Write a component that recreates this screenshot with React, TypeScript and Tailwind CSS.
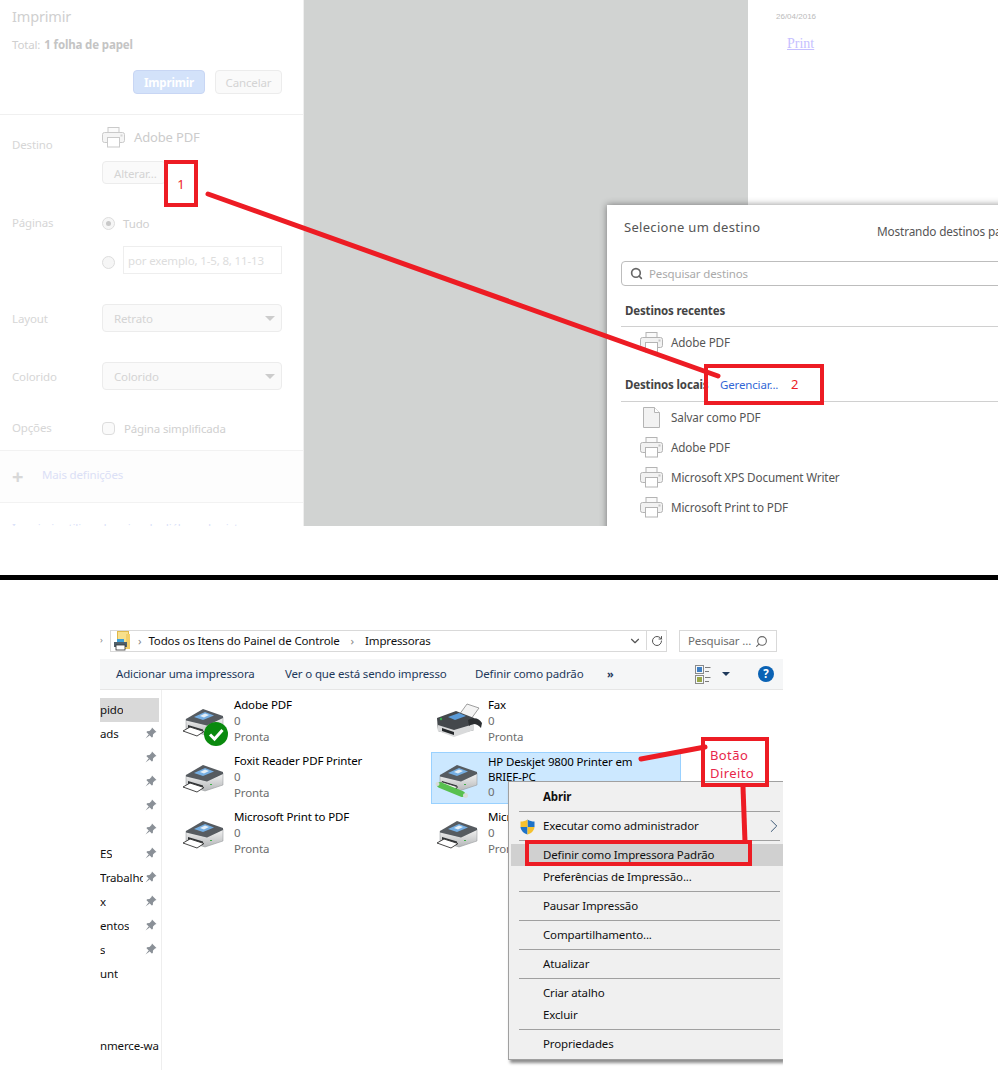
import React from 'react';
import { ChevronDown, RotateCw, Search, ChevronRight } from 'lucide-react';

const FlatPrinter = () => (
  <svg width="23" height="21" viewBox="0 0 23 21" className="shrink-0">
    <rect x="6" y="0.5" width="11" height="6" fill="#fafafa" stroke="#b4b4b4" />
    <rect x="0.5" y="5.5" width="22" height="10" rx="2" fill="#f2f2f2" stroke="#b4b4b4" />
    <rect x="5.5" y="10.5" width="12" height="9.5" fill="#fff" stroke="#b4b4b4" />
    <rect x="18.5" y="7.5" width="2" height="2" fill="#c4c4c4" />
  </svg>
);

const PageIcon = () => (
  <svg width="17" height="21" viewBox="0 0 17 21" className="shrink-0">
    <path d="M0.5 0.5H11.5L16.5 5.5V20.5H0.5Z" fill="#f2f2f2" stroke="#b4b4b4" />
    <path d="M11.5 0.5V5.5H16.5" fill="#fff" stroke="#b4b4b4" />
  </svg>
);

const DesktopPrinter = ({ kind }: { kind: 'plain' | 'default' | 'shared' }) => (
  <svg width="48" height="48" viewBox="0 0 48 48" className="shrink-0">
    <defs>
      <linearGradient id="printerBody" x1="0" y1="0" x2="0" y2="1">
        <stop offset="0" stopColor="#f4f4f4" />
        <stop offset="1" stopColor="#b4b6b8" />
      </linearGradient>
    </defs>
    <path d="M6 21L27 27L43 19V31L25 37L6 31Z" fill="url(#printerBody)" stroke="#8f9295" strokeWidth="0.5" />
    <path d="M6 21L23 11L43 18V20L27 27.5L6 22.5Z" fill="#565b60" />
    <path d="M14 19L25 14L34 17.5L23 22Z" fill="#75aee2" />
    <path d="M20 18L25 15.5L29 17L24 19.5Z" fill="#e4eef6" />
    <path d="M8 27L23 31.5V35L8 30.5Z" fill="#2f3235" />
    <rect x="30" y="30" width="2" height="1" fill="#3fae49" />
    {kind === 'shared' ? (
      <>
        <path d="M8 28L24 33L18 36L3 31Z" fill="#fff" stroke="#333" strokeWidth="0.7" />
        <path d="M6 31L28 40" stroke="#58c04f" strokeWidth="6" strokeLinecap="round" />
        <circle cx="31.5" cy="41.5" r="2.5" fill="#d8dcd8" />
        <circle cx="3.5" cy="30" r="2" fill="#d8dcd8" />
      </>
    ) : (
      <path d="M3 33L10 29L24 33.5L17 38Z" fill="#fff" stroke="#333" strokeWidth="0.9" />
    )}
    {kind === 'default' && (
      <>
        <circle cx="36" cy="36" r="12" fill="#0a8a0e" />
        <path d="M30 36.5L34.5 41L42.5 32" fill="none" stroke="#fff" strokeWidth="3" />
      </>
    )}
  </svg>
);

const FaxIcon = () => (
  <svg width="48" height="48" viewBox="0 0 48 48" className="shrink-0">
    <path d="M25 17L33 6L45 10L37 21Z" fill="#f4f4f4" stroke="#777" strokeWidth="0.7" />
    <path d="M3 20L22 13L40 20L40 32L20 37L4 33Z" fill="#44484c" />
    <path d="M4 27L20 32L40 26V32L20 39L4 33Z" fill="#d9dadb" />
    <path d="M8 30L20 34V37L8 33Z" fill="#26292c" />
    <path d="M14 19L25 15L32 18L21 22Z" fill="#5b9bd8" />
    <path d="M34 22C40 19 45 20 48 25L47 30C43 25 38 25 35 28Z" fill="#2c2f32" />
    <circle cx="7" cy="21" r="1.2" fill="#35b24a" />
  </svg>
);

const Pin = () => (
  <svg width="12" height="12" viewBox="0 0 12 12">
    <path d="M7 0.5L11.5 5L10 5.5L8 7.5L7.8 10L6.8 10.5L1.5 5.2L2 4.2L4.5 4L6.5 2Z M3.6 7.4L0.5 11.5L4.6 8.4Z" fill="#8a9097" />
  </svg>
);

const Shield = () => (
  <svg width="15" height="16" viewBox="0 0 15 16">
    <path d="M7.5 0.5C9.5 2 12 2.5 14.5 2.5V8H7.5Z" fill="#1e73c8" />
    <path d="M7.5 0.5C5.5 2 3 2.5 0.5 2.5V8H7.5Z" fill="#f5c12e" />
    <path d="M0.5 8H7.5V15.5C4 14.5 1 12 0.5 8Z" fill="#1e73c8" />
    <path d="M14.5 8H7.5V15.5C11 14.5 14 12 14.5 8Z" fill="#f5c12e" />
  </svg>
);

const FolderPrinter = () => (
  <svg width="18" height="20" viewBox="0 0 18 20">
    <rect x="4.5" y="0.5" width="11" height="17" fill="#f8e08c" stroke="#e0b94c" />
    <rect x="13" y="3" width="4" height="15" fill="#f3cf6a" />
    <rect x="1" y="11" width="13" height="5" fill="#50606a" />
    <rect x="4" y="8" width="7" height="3" fill="#3ca0d8" />
    <rect x="3" y="14" width="9" height="5" fill="#fff" stroke="#333" strokeWidth="0.8" />
  </svg>
);

const ViewIcon = () => (
  <svg width="16" height="19" viewBox="0 0 16 19">
    <rect x="0.5" y="0.5" width="8" height="8" fill="#f4f8fc" stroke="#8a8a8a" />
    <rect x="2" y="2" width="5" height="5" fill="#3f7fc4" />
    <rect x="0.5" y="10.5" width="8" height="8" fill="#f4f8fc" stroke="#8a8a8a" />
    <rect x="2" y="12" width="5" height="5" fill="#9aa848" />
    <path d="M10 2.5H15.5M10 6.5H14M10 12.5H15.5M10 16.5H14" stroke="#7c7c7c" />
  </svg>
);

const PrintSettings = () => (
  <div className="w-[304px] h-full shrink-0 bg-white border-r border-[#efefef] text-[#cfcfcf] overflow-hidden">
    <div className="h-[34px] pl-3 flex items-center text-[14.5px] text-[#d0d0d0]">Imprimir</div>
    <div className="h-[22px] pl-3 flex items-center gap-1">
      <span>Total:</span>
      <span className="font-bold text-[#c4c4c4]">1 folha de papel</span>
    </div>
    <div className="mt-[14px] h-[24px] pr-[21px] flex justify-end gap-[10px]">
      <div className="w-[72px] pt-[2px] flex items-center justify-center rounded-sm border border-[#c8d6f4] bg-[#d3e2fa] font-bold text-white">Imprimir</div>
      <div className="w-[67px] pt-[2px] flex items-center justify-center rounded-sm border border-[#ececec] bg-[#fafafa] text-[#d4d4d4]">Cancelar</div>
    </div>
    <div className="mt-[20px] border-t border-[#f0f0f0] pt-3 flex">
      <div className="w-[102px] pl-3 pt-[9px] text-[#d6d6d6]">Destino</div>
      <div>
        <div className="h-[20px] flex items-center gap-[9px]">
          <div className="opacity-70"><FlatPrinter /></div>
          <span className="pt-[2px] text-[13px] text-[#cccccc]">Adobe PDF</span>
        </div>
        <div className="mt-[14px] w-[64px] h-[23px] pt-[2px] flex items-center pl-[11px] rounded-sm border border-[#ececec] bg-[#fafafa] text-[#d4d4d4]">Alterar...</div>
      </div>
    </div>
    <div className="mt-[30px] flex">
      <div className="w-[102px] pl-3 h-[18px] flex items-center text-[#d6d6d6]">Páginas</div>
      <div>
        <div className="h-[18px] flex items-center gap-2">
          <div className="size-[13px] rounded-full border border-[#dddddd] bg-[#f6f6f6] flex items-center justify-center">
            <div className="size-[5px] rounded-full bg-[#c8c8c8]" />
          </div>
          <span className="pt-[2px] text-[#cfcfcf]">Tudo</span>
        </div>
        <div className="mt-[14px] flex items-center gap-2">
          <div className="mt-[4px] size-[13px] rounded-full border border-[#dddddd] bg-[#f6f6f6]" />
          <div className="w-[159px] h-[28px] pt-[1px] flex items-center pl-1 border border-[#eeeeee] text-[#dddddd]">por exemplo, 1-5, 8, 11-13</div>
        </div>
      </div>
    </div>
    {['Layout:Retrato', 'Colorido:Colorido'].map(row => (
      <div key={row} className="mt-[30px] flex items-center">
        <div className="w-[102px] pl-3 pt-[1px] text-[#d6d6d6]">{row.split(':')[0]}</div>
        <div className="w-[180px] h-[28px] pt-[1px] flex items-center justify-between pl-[11px] pr-[6px] rounded-sm border border-[#ececec] bg-[#fafafa] text-[#d4d4d4]">
          <span>{row.split(':')[1]}</span>
          <div className="border-x-[5px] border-t-[5px] border-x-transparent border-t-[#cccccc]" />
        </div>
      </div>
    ))}
    <div className="mt-[30px] h-[16px] flex items-center">
      <div className="w-[102px] pl-3 -mt-[1px] text-[#d6d6d6]">Opções</div>
      <div className="size-[13px] rounded-sm border border-[#dddddd] bg-[#fafafa]" />
      <span className="ml-[9px] pt-[1px] text-[#d0d0d0]">Página simplificada</span>
    </div>
    <div className="mt-[14px] h-[53px] flex items-center bg-[#fdfdfd] border-y border-[#f2f2f2]">
      <div className="ml-3 w-[30px] text-[20px] font-bold text-[#d8d8d8] leading-none">+</div>
      <span className="-mt-[3px] text-[#dbe0f6]">Mais definições</span>
    </div>
    <div className="mt-[16px] pl-3 whitespace-nowrap text-[#d8e0f8] leading-[18px]">Imprimir utilizando caixa de diálogo do sistema</div>
  </div>
);

const DestinationRow = ({ label, page }: { label: string; page?: boolean }) => (
  <div className="h-[30px] flex items-center pl-[33px]">
    <div className="w-[31px] flex justify-start">{page ? <div className="ml-[3px]"><PageIcon /></div> : <FlatPrinter />}</div>
    <span className="pt-[1px] text-[11.7px]">{label}</span>
  </div>
);

const DestinationDialog = () => (
  <div className="absolute left-[607px] top-[205px] w-[520px] h-[340px] bg-white shadow-[0_0_7px_rgba(0,0,0,0.45)] text-[#555]">
    <div className="h-[56px] pl-[17px] flex">
      <span className="mt-[13px] w-[253px] text-[13px] tracking-[0.3px]">Selecione um destino</span>
      <span className="mt-[18px] whitespace-nowrap text-[11.8px]">Mostrando destinos para a conta</span>
    </div>
    <div className="ml-[14px] h-[25px] flex items-center gap-[6px] pl-2 border border-[#bdbdbd] rounded-sm text-[#aaa]">
      <Search size={13} strokeWidth={3} className="text-[#666]" />
      <span>Pesquisar destinos</span>
    </div>
    <div className="ml-[14px] mt-[16px] h-[25px] pl-1 border-b border-[#d0d0d0] font-bold text-[#444]">Destinos recentes</div>
    <DestinationRow label="Adobe PDF" />
    <div className="ml-[14px] mt-[18px] h-[27px] pl-1 pt-[1px] flex items-start border-b border-[#d0d0d0] font-bold text-[#444]">
      <span className="w-[95px] overflow-hidden whitespace-nowrap">Destinos locais</span>
      <span className="font-normal text-[#3367d6]">Gerenciar...</span>
    </div>
    <DestinationRow label="Salvar como PDF" page />
    <DestinationRow label="Adobe PDF" />
    <DestinationRow label="Microsoft XPS Document Writer" />
    <DestinationRow label="Microsoft Print to PDF" />
  </div>
);

const sidebarRows = [
  { label: 'pido', selected: true },
  { label: 'ads', pin: true },
  { label: '', pin: true },
  { label: '', pin: true },
  { label: '', pin: true },
  { label: '', pin: true },
  { label: 'ES', pin: true },
  { label: 'Trabalho', pin: true },
  { label: 'x', pin: true },
  { label: 'entos', pin: true },
  { label: 's', pin: true },
  { label: 'unt' },
  { label: '' },
  { label: '' },
  { label: 'nmerce-war' },
];

const tiles = [
  { icon: <DesktopPrinter kind="default" />, lines: ['Adobe PDF'], rest: ['0', 'Pronta'] },
  { icon: <FaxIcon />, lines: ['Fax'], rest: ['0', 'Pronta'] },
  { icon: <DesktopPrinter kind="plain" />, lines: ['Foxit Reader PDF Printer'], rest: ['0', 'Pronta'] },
  { icon: <DesktopPrinter kind="shared" />, lines: ['HP Deskjet 9800 Printer em', 'BRIEF-PC'], rest: ['0'], selected: true },
  { icon: <DesktopPrinter kind="plain" />, lines: ['Microsoft Print to PDF'], rest: ['0', 'Pronta'] },
  { icon: <DesktopPrinter kind="plain" />, lines: ['Microsoft XPS Document Writer'], rest: ['0', 'Pronta'] },
];

const menuItems = [
  'Abrir',
  '-',
  'Executar como administrador',
  '-',
  'Definir como Impressora Padrão',
  'Preferências de Impressão...',
  '-',
  'Pausar Impressão',
  '-',
  'Compartilhamento...',
  '-',
  'Atualizar',
  '-',
  'Criar atalho',
  'Excluir',
  '-',
  'Propriedades',
];

const ContextMenu = () => (
  <div className="absolute left-[408px] top-[201px] w-[275px] h-[279px] pt-1 pl-[2px] bg-[#f0f0f0] border border-r-0 border-[#a0a0a0] shadow-[2px_3px_3px_rgba(0,0,0,0.45)] text-[#111]">
    {menuItems.map((item, i) =>
      item === '-' ? (
        <div key={i} className="h-[7px] flex items-center ml-2 mr-[3px]">
          <div className="w-full border-t border-[#a0a0a0]" />
        </div>
      ) : (
        <div
          key={i}
          className={`relative h-[22px] pl-[32px] flex items-center ${item.startsWith('Definir') ? 'bg-[#d0d0d0]' : ''} ${item === 'Abrir' ? 'font-bold' : ''}`}
        >
          {item.startsWith('Executar') && (
            <>
              <div className="absolute left-[9px] top-[4px]"><Shield /></div>
              <ChevronRight size={22} strokeWidth={1} className="absolute -right-[2px] top-0 text-[#2b4a6b]" />
            </>
          )}
          {item}
        </div>
      ),
    )}
  </div>
);

const Explorer = () => (
  <div className="relative ml-[100px] w-[683px] h-full pt-[50px] overflow-hidden bg-white text-black">
    <div className="flex h-[22px]">
      <div className="w-[10px] text-[9px] text-[#888] leading-[20px]">›</div>
      <div className="w-[557px] pb-[1px] flex items-center border border-[#d9d9d9] text-[#111]">
        <div className="ml-[2px]"><FolderPrinter /></div>
        <span className="mx-[7px] text-[#888]">›</span>
        <span>Todos os Itens do Painel de Controle</span>
        <span className="mx-[11px] text-[#888]">›</span>
        <span>Impressoras</span>
        <div className="ml-auto h-full flex items-center">
          <ChevronDown size={14} className="mr-1 text-[#555]" />
          <div className="h-full w-[20px] border-l border-[#d9d9d9] flex items-center justify-center">
            <RotateCw size={12} className="text-[#555]" />
          </div>
        </div>
      </div>
      <div className="ml-3 w-[98px] flex items-center justify-between px-2 border border-[#d9d9d9] text-[#6d6d6d]">
        <span>Pesquisar ...</span>
        <Search size={13} strokeWidth={2} className="-scale-x-100 text-[#666]" />
      </div>
    </div>
    <div className="mt-[7px] h-[31px] flex items-center pl-4 bg-[#f5f6f7] border-b border-[#e6e6e6] text-[#1e395b]">
      <span className="w-[169px]">Adicionar uma impressora</span>
      <span className="w-[190px]">Ver o que está sendo impresso</span>
      <span className="w-[132px]">Definir como padrão</span>
      <span className="w-[88px] font-bold text-[11px]">»</span>
      <ViewIcon />
      <div className="ml-[11px] border-x-[4px] border-t-[4px] border-x-transparent border-t-[#1e395b]" />
      <div className="ml-[28px] size-[16px] rounded-full bg-[#0a62b4] text-white font-bold flex items-center justify-center">?</div>
    </div>
    <div className="flex">
      <div className="w-[62px] h-[380px] shrink-0 pt-[8px] border-r border-[#eeeeee] text-[#111]">
        {sidebarRows.map((row, i) => (
          <div key={i} className={`relative h-[24px] w-[59px] flex items-center ${row.selected ? 'bg-[#d9d9d9]' : ''}`}>
            <span className="max-w-[59px] overflow-hidden whitespace-nowrap" style={row.pin ? { maxWidth: 43 } : undefined}>{row.label}</span>
            {row.pin && <div className="absolute left-[45px] top-[5px]"><Pin /></div>}
          </div>
        ))}
      </div>
      <div className="grid grid-cols-[250px_250px] gap-x-1 gap-y-1 pl-[15px] pt-[6px] content-start">
        {tiles.map((tile, i) => (
          <div key={i} className={`h-[52px] flex gap-[6px] pl-[2px] border overflow-hidden ${tile.selected ? 'bg-[#cce8ff] border-[#99d1ff]' : 'border-transparent'}`}>
            <div className="mt-[1px]">{tile.icon}</div>
            <div className={tile.selected ? 'pt-[1px] leading-[15px]' : 'leading-[16px]'}>
              {tile.lines.map(line => <div key={line} className="whitespace-nowrap">{line}</div>)}
              {tile.rest.map(line => <div key={line} className="text-[#6d6d6d]">{line}</div>)}
            </div>
          </div>
        ))}
      </div>
    </div>
    <ContextMenu />
  </div>
);

export default function App() {
  return (
    <div className="w-[998px] h-[1070px] bg-white overflow-hidden text-[11.5px] tracking-[-0.15px]" style={{ fontFamily: '"Noto Sans", sans-serif' }}>
      <div className="relative h-[526px] flex overflow-hidden">
        <PrintSettings />
        <div className="w-[444px] bg-[#d1d3d2]" />
        <div className="flex-1 bg-white pl-[28px] pt-[12px]">
          <div className="text-[8px] leading-[10px] tracking-normal text-[#bbbbbb]" style={{ fontFamily: '"Liberation Sans", sans-serif' }}>26/04/2016</div>
          <div className="mt-[11px] ml-[11px] text-[14px] tracking-normal underline text-[#c6c0ff]" style={{ fontFamily: '"Liberation Serif", serif' }}>Print</div>
        </div>
        <DestinationDialog />
        <svg className="absolute inset-0" width="998" height="526">
          <path d="M208 194L718 376" stroke="#ed1c24" strokeWidth="5" strokeLinecap="round" />
        </svg>
        <div className="absolute left-[164px] top-[160px] w-[34px] h-[47px] pt-[3px] border-[4px] border-[#ed1c24] flex items-center justify-center text-[13px] text-[#ed1c24]">1</div>
        <div className="absolute left-[704px] top-[364px] w-[120px] h-[41px] pt-[1px] border-[4px] border-[#ed1c24] flex items-center pl-[83px] text-[13px] text-[#ed1c24]">2</div>
      </div>
      <div className="mt-[49px] h-[5px] bg-black" />
      <div className="relative h-[490px]">
        <Explorer />
        <svg className="absolute inset-0" width="998" height="490">
          <path d="M641 179L705 167" stroke="#ed1c24" strokeWidth="5" strokeLinecap="round" />
          <path d="M743 207L745 262" stroke="#ed1c24" strokeWidth="5" />
        </svg>
        <div className="absolute left-[701px] top-[157px] w-[68px] h-[50px] border-[4px] border-[#ed1c24] pl-[5px] pt-[5px] text-[13px] leading-[18px] tracking-[0.4px] text-[#e8264a]">
          <div>Botão</div>
          <div>Direito</div>
        </div>
        <div className="absolute left-[525px] top-[260px] w-[227px] h-[26px] border-[4px] border-[#ed1c24]" />
      </div>
    </div>
  );
}
